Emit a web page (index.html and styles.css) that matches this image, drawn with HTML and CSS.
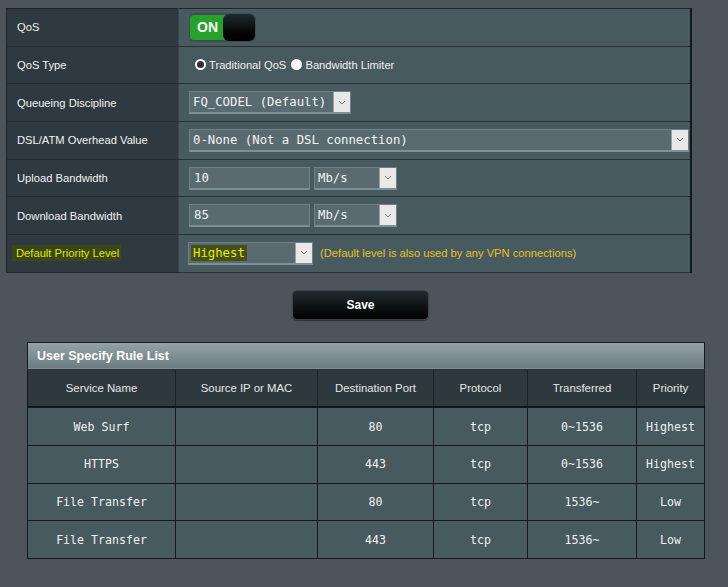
FILE: index.html
```html
<!DOCTYPE html>
<html>
<head>
<meta charset="utf-8">
<link rel="stylesheet" href="styles.css">
</head>
<body>
<table class="settings">
  <tr>
    <th>QoS</th>
    <td>
      <div class="toggle"><span class="on">ON</span><span class="knob"></span></div>
    </td>
  </tr>
  <tr>
    <th>QoS Type</th>
    <td class="radios">
      <span class="radio checked"></span><span class="rlabel">Traditional QoS</span>
      <span class="radio filled"></span><span class="rlabel">Bandwidth Limiter</span>
    </td>
  </tr>
  <tr>
    <th>Queueing Discipline</th>
    <td><div class="select w-q"><span class="val">FQ_CODEL (Default)</span><span class="arrow"><svg width="8" height="5" viewBox="0 0 8 5"><path d="M1 1 L4 4 L7 1" fill="none" stroke="#777" stroke-width="1"/></svg></span></div></td>
  </tr>
  <tr>
    <th>DSL/ATM Overhead Value</th>
    <td><div class="select w-dsl"><span class="val">0-None (Not a DSL connection)</span><span class="arrow"><svg width="8" height="5" viewBox="0 0 8 5"><path d="M1 1 L4 4 L7 1" fill="none" stroke="#777" stroke-width="1"/></svg></span></div></td>
  </tr>
  <tr>
    <th>Upload Bandwidth</th>
    <td class="row-inline"><div class="input">10</div><div class="select w-unit"><span class="val">Mb/s</span><span class="arrow"><svg width="8" height="5" viewBox="0 0 8 5"><path d="M1 1 L4 4 L7 1" fill="none" stroke="#777" stroke-width="1"/></svg></span></div></td>
  </tr>
  <tr>
    <th>Download Bandwidth</th>
    <td class="row-inline"><div class="input">85</div><div class="select w-unit"><span class="val">Mb/s</span><span class="arrow"><svg width="8" height="5" viewBox="0 0 8 5"><path d="M1 1 L4 4 L7 1" fill="none" stroke="#777" stroke-width="1"/></svg></span></div></td>
  </tr>
  <tr>
    <th><span class="hl">Default Priority Level</span></th>
    <td class="row-inline"><div class="select w-prio"><span class="val"><span class="hl2">Highest</span></span><span class="arrow"><svg width="8" height="5" viewBox="0 0 8 5"><path d="M1 1 L4 4 L7 1" fill="none" stroke="#777" stroke-width="1"/></svg></span></div><span class="note">(Default level is also used by any VPN connections)</span></td>
  </tr>
</table>

<div class="actions"><button class="save">Save</button></div>

<table class="rules">
  <colgroup>
    <col class="c1"><col class="c2"><col class="c3"><col class="c4"><col class="c5"><col class="c6">
  </colgroup>
  <tr><td class="title" colspan="6">User Specify Rule List</td></tr>
  <tr class="head">
    <th>Service Name</th>
    <th>Source IP or MAC</th>
    <th>Destination Port</th>
    <th>Protocol</th>
    <th>Transferred</th>
    <th>Priority</th>
  </tr>
  <tr><td>Web Surf</td><td></td><td>80</td><td>tcp</td><td>0~1536</td><td>Highest</td></tr>
  <tr><td>HTTPS</td><td></td><td>443</td><td>tcp</td><td>0~1536</td><td>Highest</td></tr>
  <tr><td>File Transfer</td><td></td><td>80</td><td>tcp</td><td>1536~</td><td>Low</td></tr>
  <tr><td>File Transfer</td><td></td><td>443</td><td>tcp</td><td>1536~</td><td>Low</td></tr>
</table>
</body>
</html>
```

FILE: styles.css
```css
html, body {
  margin: 0;
  padding: 0;
}
body {
  background: #4c5559;
  font-family: "Liberation Sans", Arial, sans-serif;
  font-size: 11.2px;
  color: #fff;
  width: 728px;
  height: 587px;
  overflow: hidden;
}

.settings {
  margin: 8px 0 0 6px;
  width: 686px;
  border-collapse: collapse;
  border: 1px solid #1f2629;
  border-right: 2px solid #15191b;
}
.settings tr {
  height: 37.7px;
}
.settings th {
  width: 161px;
  background: #2e3a3f;
  text-align: left;
  font-weight: normal;
  padding: 0 0 0 10px;
  color: #f2f2f2;
  border-bottom: 1px solid #222a2d;
  border-right: 1px solid #3a474c;
}
.settings td {
  background: #475a5f;
  padding: 0 0 0 10px;
  border-bottom: 1px solid #283034;
}

.toggle {
  display: flex;
  width: 67px;
  height: 29px;
  border-radius: 6px;
  background: #3f4c51;
  padding: 1px;
  box-sizing: border-box;
  align-items: center;
  margin-top: 1px;
}
.toggle .on {
  width: 40px;
  height: 25px;
  background: #24a22c;
  border-radius: 4px 0 0 4px;
  font-weight: bold;
  font-size: 14px;
  line-height: 25px;
  padding-left: 7px;
  box-sizing: border-box;
  color: #fff;
}
.toggle .knob {
  width: 34px;
  height: 27px;
  margin-left: -6px;
  border-radius: 6px;
  background: linear-gradient(#1f2b2f, #000 80%);
}

.radios {
  color: #f0f0f0;
}
.radio {
  display: inline-block;
  width: 11px;
  height: 11px;
  border-radius: 50%;
  background: #fff;
  vertical-align: -1px;
  margin: 0 3px 0 6px;
  box-sizing: border-box;
}
.radio.checked {
  border: 2px solid #fff;
  background: #2a3236;
}
.radio.filled {
  margin-left: 2px;
}

.select {
  display: inline-flex;
  height: 23px;
  background: #596b71;
  border: 1px solid #6f8187;
  border-bottom: 2px solid #7f9095;
  box-sizing: border-box;
  align-items: stretch;
  vertical-align: middle;
}
.select .val {
  flex: 1;
  font-family: "DejaVu Sans Mono", monospace;
  font-size: 12.3px;
  line-height: 20px;
  padding-left: 3px;
  color: #f4f4f4;
  white-space: nowrap;
}
.select .arrow {
  width: 16px;
  background: #e8e8e8;
  border-left: 1px solid #9aa4a7;
  display: flex;
  align-items: center;
  justify-content: center;
}
.w-q { width: 162px; }
.w-dsl { width: 500px; }
.w-unit { width: 83px; }
.w-prio { width: 125px; }

.row-inline > * {
  vertical-align: middle;
}
.input {
  display: inline-block;
  width: 121px;
  height: 23px;
  background: #596b71;
  border: 1px solid #6f8187;
  border-bottom: 2px solid #7f9095;
  box-sizing: border-box;
  font-family: "DejaVu Sans Mono", monospace;
  font-size: 12.3px;
  line-height: 20px;
  padding-left: 4px;
  color: #f4f4f4;
  margin-right: 4px;
}
.w-prio {
  margin-left: -1px;
}
.w-prio .val {
  padding-left: 2px;
}
.hl {
  background: #3b4619;
  color: #dde800;
  padding: 2px 2px 2px 4px;
  margin-left: -5px;
}
.hl2 {
  background: #474f18;
  color: #e8f000;
  padding: 1px 2px;
}
.note {
  color: #e8c020;
  margin-left: 7px;
}

.actions {
  display: flex;
  margin: 17px 0 0 292px;
}
.save {
  width: 137px;
  height: 30px;
  border: 1px solid #3d474b;
  border-radius: 5px;
  background: linear-gradient(#1f2b2f, #000);
  color: #fff;
  font-family: "Liberation Sans", Arial, sans-serif;
  font-weight: bold;
  font-size: 12px;
  box-shadow: 0 1px 1px rgba(0,0,0,0.4);
}

.rules {
  margin: 22px 0 0 27px;
  width: 677px;
  border-collapse: collapse;
  table-layout: fixed;
  border: 1px solid #15191b;
}
.rules .c1 { width: 148px; }
.rules .c2 { width: 142px; }
.rules .c3 { width: 116px; }
.rules .c4 { width: 94px; }
.rules .c5 { width: 109px; }
.rules .c6 { width: 68px; }
.rules td.title {
  height: 26px;
  background: linear-gradient(#95a3a8, #6c7b80);
  font-family: "Liberation Sans", Arial, sans-serif;
  font-weight: bold;
  font-size: 12.5px;
  padding: 0 0 0 9px;
  text-align: left;
  color: #fff;
  border: 0;
  border-bottom: 1px solid #2a3236;
}
.rules .head th {
  height: 36.5px;
  padding: 0;
  background: #2e393d;
  font-weight: normal;
  color: #e6e6e6;
  border-right: 1px solid #1c2225;
  border-bottom: 2px solid #111518;
  font-size: 11.4px;
}
.rules td {
  height: 36.7px;
  padding: 0;
  background: #475a5f;
  text-align: center;
  font-family: "DejaVu Sans Mono", monospace;
  font-size: 11.6px;
  color: #eef2f2;
  border: 1px solid #15191b;
  border-top: 1px solid #2e383b;
}
```
